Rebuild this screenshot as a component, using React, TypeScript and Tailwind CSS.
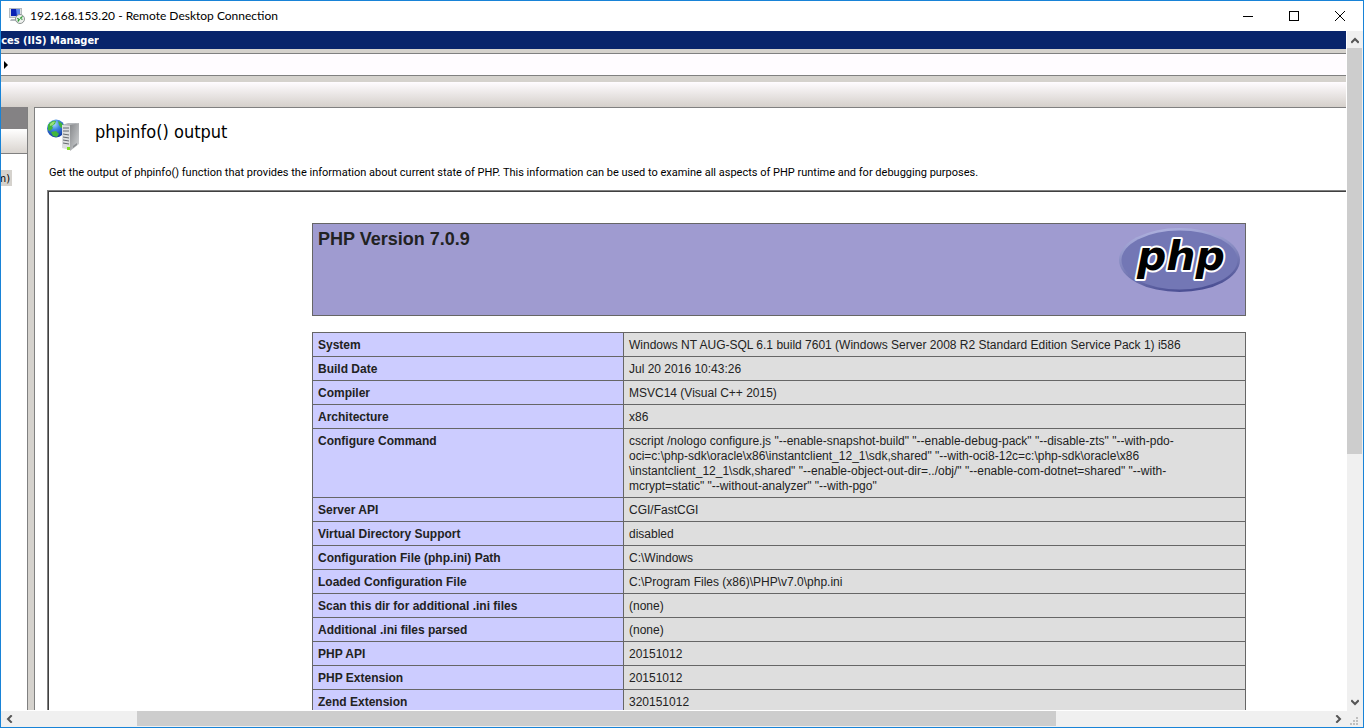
import { ReactNode } from 'react';

interface InfoRow {
  label: string;
  value: ReactNode;
}

const infoRows: InfoRow[] = [
  { label: 'System', value: 'Windows NT AUG-SQL 6.1 build 7601 (Windows Server 2008 R2 Standard Edition Service Pack 1) i586' },
  { label: 'Build Date', value: 'Jul 20 2016 10:43:26' },
  { label: 'Compiler', value: 'MSVC14 (Visual C++ 2015)' },
  { label: 'Architecture', value: 'x86' },
  {
    label: 'Configure Command',
    value: (
      <>
        cscript /nologo configure.js "--enable-snapshot-build" "--enable-debug-pack" "--disable-zts" "--with-pdo-
        <br />
        oci=c:\php-sdk\oracle\x86\instantclient_12_1\sdk,shared" "--with-oci8-12c=c:\php-sdk\oracle\x86
        <br />
        \instantclient_12_1\sdk,shared" "--enable-object-out-dir=../obj/" "--enable-com-dotnet=shared" "--with-
        <br />
        mcrypt=static" "--without-analyzer" "--with-pgo"
      </>
    ),
  },
  { label: 'Server API', value: 'CGI/FastCGI' },
  { label: 'Virtual Directory Support', value: 'disabled' },
  { label: 'Configuration File (php.ini) Path', value: 'C:\\Windows' },
  { label: 'Loaded Configuration File', value: 'C:\\Program Files (x86)\\PHP\\v7.0\\php.ini' },
  { label: 'Scan this dir for additional .ini files', value: '(none)' },
  { label: 'Additional .ini files parsed', value: '(none)' },
  { label: 'PHP API', value: '20151012' },
  { label: 'PHP Extension', value: '20151012' },
  { label: 'Zend Extension', value: '320151012' },
];

function RemoteIcon() {
  return (
    <svg width="16" height="16" viewBox="0 0 16 16" aria-hidden="true">
      <rect x="0.5" y="0.5" width="12" height="9" fill="#d9dde0" stroke="#b4babf" />
      <rect x="2" y="1" width="9" height="7" fill="#0a22b4" />
      <path d="M7 1h4v7H8z" fill="#5d86e8" />
      <path d="M2 11h6v2H1z" fill="#b4babf" />
      <circle cx="11" cy="11" r="4.5" fill="#eef0ee" stroke="#8b9290" />
      <path d="M8.3 10.2l2 1.5-1.6 1.8M13.6 8.4l-2 1.6 1.8 1.6" fill="none" stroke="#2d9a35" strokeWidth="1.2" />
    </svg>
  );
}

function ServerIcon() {
  return (
    <svg width="34" height="34" viewBox="0 0 34 34" aria-hidden="true">
      <defs>
        <radialGradient id="globe" cx="0.4" cy="0.25" r="0.8">
          <stop offset="0" stopColor="#a9dcff" />
          <stop offset="0.4" stopColor="#3e86e0" />
          <stop offset="1" stopColor="#0b2f9c" />
        </radialGradient>
        <linearGradient id="side" x1="0" y1="0" x2="1" y2="1">
          <stop offset="0" stopColor="#85878a" />
          <stop offset="1" stopColor="#d3d5d7" />
        </linearGradient>
      </defs>
      <circle cx="9" cy="9.5" r="9" fill="url(#globe)" />
      <path d="M1 6c2-3 5-5 8-4l-1 3-3 2 1 2-3 3-2-1zM11 2c3 1 5 3 6 6l-3 1-2-3zM4 13l5-1 3 3-2 3-4-1z" fill="#41b53c" />
      <path d="M3 5c2-2 4-3 5-2L6 6 3 7z" fill="#9be07c" />
      <path d="M15 6l8 0v25l-8-2z" fill="#dcdee0" />
      <path d="M15 6l6-2 11 0-9 3z" fill="#b5b8bb" />
      <path d="M23 6l9-2v21l-9 7z" fill="url(#side)" />
      <path d="M16 9l6 0M16 12l6 0M16 15l6 1M16 18l6 1M16 21l6 1M16 24l6 1" stroke="#65696e" strokeWidth="1" />
      <path d="M26 27l4-3v2l-4 3z" fill="#8b8e91" />
      <rect x="20" y="28" width="3" height="3" fill="#7fe01f" />
    </svg>
  );
}

function PhpLogo() {
  return (
    <svg width="121" height="65" viewBox="0 0 121 65" role="img" aria-label="PHP logo" className="shrink-0">
      <defs>
        <linearGradient id="rim" x1="0.3" y1="0" x2="0.6" y2="1">
          <stop offset="0" stopColor="#afb2df" />
          <stop offset="0.5" stopColor="#8185bd" />
          <stop offset="1" stopColor="#484c91" />
        </linearGradient>
      </defs>
      <ellipse cx="60.5" cy="32" rx="60.5" ry="32" fill="url(#rim)" />
      <ellipse cx="60.5" cy="32" rx="58" ry="29.5" fill="#7377b5" />
      <text
        x="18"
        y="42"
        fontSize="41"
        className="font-['DejaVu_Sans'] font-bold italic"
        fill="#000"
        stroke="#fff"
        strokeWidth="4"
        strokeLinejoin="round"
        paintOrder="stroke"
      >
        php
      </text>
    </svg>
  );
}

const chevrons = {
  up: 'M1 6l3-3 3 3',
  down: 'M1 2l3 3 3-3',
  left: 'M5 1L2 4l3 3',
  right: 'M2 1l3 3-3 3',
};

function ScrollButton({ direction }: { direction: keyof typeof chevrons }) {
  return (
    <button type="button" aria-label={`Scroll ${direction}`} className="flex size-[17px] shrink-0 items-center justify-center">
      <svg width="8" height="8" viewBox="0 0 8 8">
        <path d={chevrons[direction]} fill="none" stroke="#555" strokeWidth="2" strokeLinecap="square" />
      </svg>
    </button>
  );
}

function TitleBar() {
  return (
    <header className="flex h-[30px] shrink-0 items-center bg-white pl-2">
      <RemoteIcon />
      <span className="ml-1 flex-1 pl-px font-['Lato',sans-serif] text-[12px] text-black">
        192.168.153.20 - Remote Desktop Connection
      </span>
      <button type="button" aria-label="Minimize" className="flex h-full w-[46px] items-center justify-center">
        <svg width="10" height="10" viewBox="0 0 10 10"><path d="M0 5.5h10" stroke="#000" /></svg>
      </button>
      <button type="button" aria-label="Maximize" className="flex h-full w-[46px] items-center justify-center">
        <svg width="10" height="10" viewBox="0 0 10 10"><rect x="0.5" y="0.5" width="9" height="9" fill="none" stroke="#000" /></svg>
      </button>
      <button type="button" aria-label="Close" className="flex h-full w-[46px] items-center justify-center">
        <svg width="10" height="10" viewBox="0 0 10 10"><path d="M0 0l10 10M10 0L0 10" stroke="#000" /></svg>
      </button>
    </header>
  );
}

function TreePanel() {
  return (
    <aside className="w-[27px] shrink-0 overflow-hidden border-r border-[#808080] bg-white text-[11px]">
      <div className="h-[22px] bg-[#848284]" />
      <div className="h-[25px] border-b border-[#808080] bg-linear-to-b from-white to-[#d9d4cf]" />
      <div className="mt-4 flex h-4 w-[11px] justify-end overflow-hidden bg-[#d5d2cd] pr-[2px] leading-[18px]">
        <span>m)</span>
      </div>
    </aside>
  );
}

function PhpInfo() {
  return (
    <div className="min-h-0 flex-1 overflow-hidden border-t border-l border-[#808080]">
      <div className="h-full border-t border-l border-[#404040] pt-[31px] pl-[263px] font-['Liberation_Sans',sans-serif] text-[#222]">
        <div className="flex h-[93px] w-[934px] items-start justify-between border border-[#666] bg-[#9f9bd0] px-[5px] pt-1">
          <h1 className="text-[18px] leading-[22px] font-bold">PHP Version 7.0.9</h1>
          <PhpLogo />
        </div>
        <table className="mt-4 w-[934px] table-fixed border-collapse text-[12px] leading-[15px]">
          <colgroup>
            <col className="w-[311px]" />
            <col />
          </colgroup>
          <tbody>
            {infoRows.map((row) => (
              <tr key={row.label}>
                <th scope="row" className="border border-[#666] bg-[#ccccff] px-[5px] pt-[5px] pb-[3px] text-left align-top font-bold">
                  {row.label}
                </th>
                <td className="border border-[#666] bg-[#dedede] px-[5px] pt-[5px] pb-[3px] align-top whitespace-nowrap">{row.value}</td>
              </tr>
            ))}
          </tbody>
        </table>
      </div>
    </div>
  );
}

export default function App() {
  return (
    <div className="flex h-screen flex-col overflow-hidden border border-[#1883d7] bg-[#f0f0f0]">
      <TitleBar />
      <div className="flex min-h-0 flex-1">
        <div className="flex min-w-0 flex-1 flex-col border-r border-b border-white bg-[#d5d2cd] font-['DejaVu_Sans_Condensed','DejaVu_Sans',sans-serif] text-black">
          <div className="h-[18px] shrink-0 bg-[#08246b]">
            <div className="flex w-[98px] justify-end overflow-hidden text-[11px] leading-5 font-bold whitespace-nowrap text-white">
              <span>ces (IIS) Manager</span>
            </div>
          </div>
          <nav className="mt-1 flex h-[23px] shrink-0 items-center border-y border-[#808080] bg-[#fffcff] pl-[3px]">
            <svg width="4" height="8" viewBox="0 0 4 8"><path d="M0 0l4 4-4 4z" fill="#000" /></svg>
          </nav>
          <div className="mt-[6px] h-[25px] shrink-0 bg-linear-to-b from-[#fffcff] to-[#d5d0cb]" />
          <div className="flex min-h-0 flex-1">
            <TreePanel />
            <main className="ml-[6px] flex min-w-0 flex-1 flex-col border-t border-l border-[#808080] bg-white pl-3">
              <div className="flex h-[56px] shrink-0 items-center">
                <ServerIcon />
                <h2 className="ml-[14px] pb-2 text-[18px] leading-5">phpinfo() output</h2>
              </div>
              <p className="h-[26px] shrink-0 pl-[2px] font-['Roboto',sans-serif] text-[11px] leading-[18px] whitespace-nowrap">
                Get the output of phpinfo() function that provides the information about current state of PHP. This information can be used to examine all aspects of PHP runtime and for debugging purposes.
              </p>
              <PhpInfo />
            </main>
          </div>
        </div>
        <div className="flex w-4 shrink-0 flex-col items-center">
          <ScrollButton direction="up" />
          <div className="flex w-full flex-1 flex-col pr-px">
            <div className="grow-[407] bg-[#cdcdcd]" />
            <div className="grow-[240]" />
          </div>
          <ScrollButton direction="down" />
        </div>
      </div>
      <div className="flex h-4 shrink-0 items-center">
        <ScrollButton direction="left" />
        <div className="flex h-full flex-1 pb-px">
          <div className="grow-[119]" />
          <div className="grow-[918] bg-[#cdcdcd]" />
          <div className="grow-[274]" />
        </div>
        <ScrollButton direction="right" />
        <svg width="16" height="16" viewBox="0 0 16 16" aria-hidden="true">
          <path d="M9 6h2v2H9zM6 9h2v2H6zM9 9h2v2H9zM3 12h2v2H3zM6 12h2v2H6zM9 12h2v2H9z" fill="#bfbfbf" />
        </svg>
      </div>
    </div>
  );
}
